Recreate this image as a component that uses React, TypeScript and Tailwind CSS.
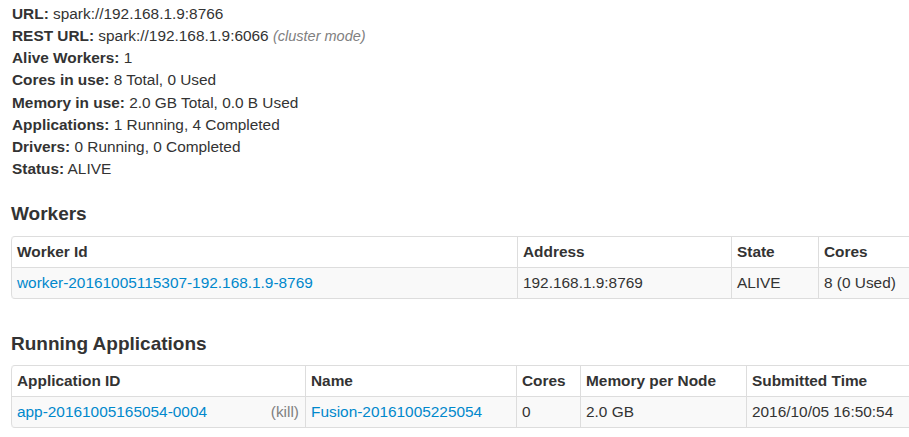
import React from "react";

const font = { fontFamily: '"Liberation Sans", Arial, Helvetica, sans-serif' };

function Info() {
  const rows: [string, React.ReactNode][] = [
    ["URL:", " spark://192.168.1.9:8766"],
    [
      "REST URL:",
      <>
        {" spark://192.168.1.9:6066 "}
        <span className="italic text-[14.5px] text-[#808080]">(cluster mode)</span>
      </>,
    ],
    ["Alive Workers:", " 1"],
    ["Cores in use:", " 8 Total, 0 Used"],
    ["Memory in use:", " 2.0 GB Total, 0.0 B Used"],
    ["Applications:", " 1 Running, 4 Completed"],
    ["Drivers:", " 0 Running, 0 Completed"],
    ["Status:", " ALIVE"],
  ];
  return (
    <ul className="pl-[1px]">
      {rows.map(([k, v], i) => (
        <li key={i} className="leading-[22.15px] whitespace-pre">
          <strong className="font-bold">{k}</strong>
          {v}
        </li>
      ))}
    </ul>
  );
}

function Table({
  widths,
  headers,
  row,
}: {
  widths: number[];
  headers: string[];
  row: React.ReactNode[];
}) {
  const total = widths.reduce((a, b) => a + b, 0);
  return (
    <table
      className="table-fixed border-separate border-spacing-0 border-y border-r border-[#dddddd] rounded-[4px]"
      style={{ width: total }}
    >
      <colgroup>
        {widths.map((w, i) => (
          <col key={i} style={{ width: w }} />
        ))}
      </colgroup>
      <thead>
        <tr className="bg-white">
          {headers.map((h, i) => (
            <th
              key={i}
              className={`text-left font-bold leading-[22px] py-[4px] px-[5px] border-l border-[#dddddd] ${
                i === 0 ? "rounded-tl-[4px]" : ""
              }`}
            >
              {h}
            </th>
          ))}
        </tr>
      </thead>
      <tbody>
        <tr className="bg-[#f9f9f9]">
          {row.map((c, i) => (
            <td
              key={i}
              className={`leading-[22px] py-[4px] px-[5px] border-l border-t border-[#dddddd] whitespace-nowrap ${
                i === 0 ? "rounded-bl-[4px]" : ""
              }`}
            >
              {c}
            </td>
          ))}
        </tr>
      </tbody>
    </table>
  );
}

const link = "text-[#0088cc]";

export default function App() {
  return (
    <div
      className="w-[909px] h-[437px] overflow-hidden bg-white text-[#333333] text-[15.4px]"
      style={font}
    >
      <div className="pl-[11px] pt-[3px] w-[1100px]">
        <Info />
        <h4 className="text-[19px] font-bold leading-[22px] mt-[23px] mb-[11px]">Workers</h4>
        <Table
          widths={[506, 214, 87, 130]}
          headers={["Worker Id", "Address", "State", "Cores"]}
          row={[
            <a className={link}>worker-20161005115307-192.168.1.9-8769</a>,
            "192.168.1.9:8769",
            "ALIVE",
            "8 (0 Used)",
          ]}
        />
        <h4 className="text-[19px] font-bold leading-[22px] mt-[34px] mb-[10px]">
          Running Applications
        </h4>
        <Table
          widths={[294, 211, 64, 166, 200]}
          headers={["Application ID", "Name", "Cores", "Memory per Node", "Submitted Time"]}
          row={[
            <div className="flex justify-between">
              <a className={link}>app-20161005165054-0004</a>
              <span className="text-[#808080] mr-[1px]">(kill)</span>
            </div>,
            <a className={link}>Fusion-20161005225054</a>,
            "0",
            "2.0 GB",
            "2016/10/05 16:50:54",
          ]}
        />
      </div>
    </div>
  );
}
